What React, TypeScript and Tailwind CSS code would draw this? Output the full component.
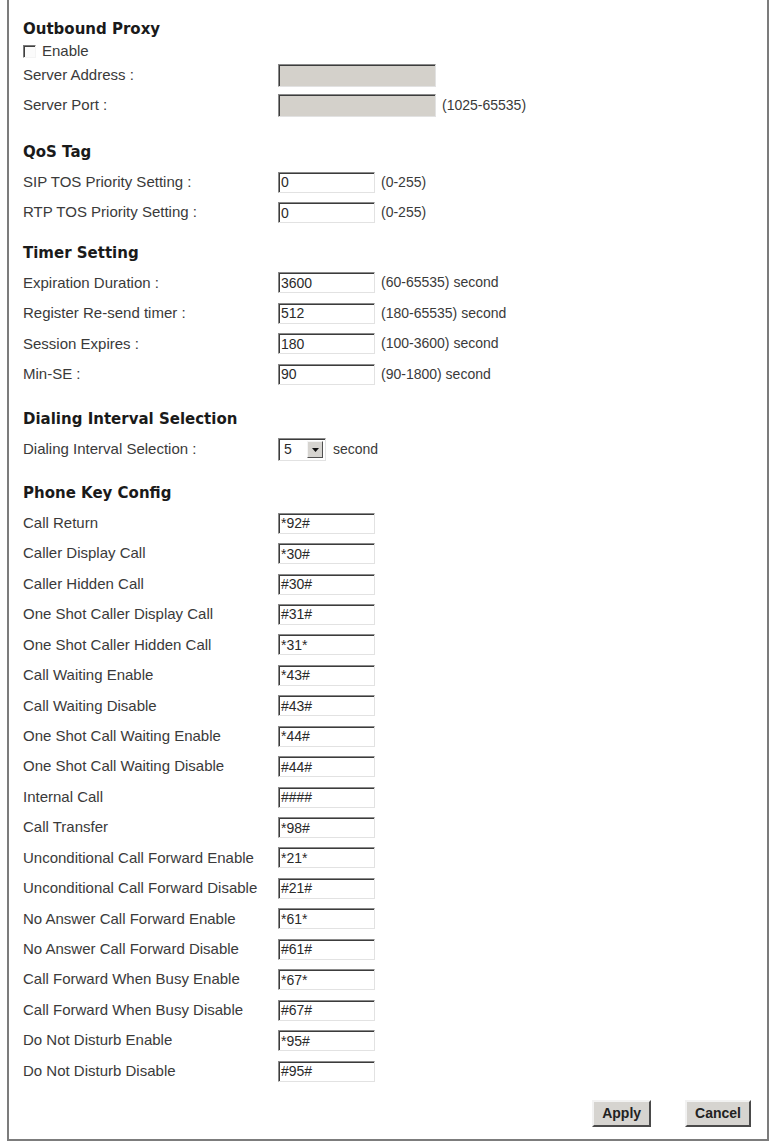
import type { ReactNode } from 'react';

const SANS = "font-['Liberation_Sans',Arial,sans-serif]";
const HEAD = "font-['DejaVu_Sans',Verdana,sans-serif]";

const PHONE_KEYS: [string, string][] = [
  ['Call Return', '*92#'],
  ['Caller Display Call', '*30#'],
  ['Caller Hidden Call', '#30#'],
  ['One Shot Caller Display Call', '#31#'],
  ['One Shot Caller Hidden Call', '*31*'],
  ['Call Waiting Enable', '*43#'],
  ['Call Waiting Disable', '#43#'],
  ['One Shot Call Waiting Enable', '*44#'],
  ['One Shot Call Waiting Disable', '#44#'],
  ['Internal Call', '####'],
  ['Call Transfer', '*98#'],
  ['Unconditional Call Forward Enable', '*21*'],
  ['Unconditional Call Forward Disable', '#21#'],
  ['No Answer Call Forward Enable', '*61*'],
  ['No Answer Call Forward Disable', '#61#'],
  ['Call Forward When Busy Enable', '*67*'],
  ['Call Forward When Busy Disable', '#67#'],
  ['Do Not Disturb Enable', '*95#'],
  ['Do Not Disturb Disable', '#95#'],
];

const TIMERS: [string, string, string][] = [
  ['Expiration Duration :', '3600', '(60-65535) second'],
  ['Register Re-send timer :', '512', '(180-65535) second'],
  ['Session Expires :', '180', '(100-3600) second'],
  ['Min-SE :', '90', '(90-1800) second'],
];

function Heading({ children }: { children: ReactNode }) {
  return (
    <div className={`h-[30px] flex items-center ${HEAD} text-[15px] font-bold text-[#1a1a1a]`}>
      {children}
    </div>
  );
}

function Row({ label, children }: { label: string; children: ReactNode }) {
  return (
    <div className="h-[30.45px] flex items-center">
      <div className="w-[255px] shrink-0 text-[15px] text-[#3a3a3a]">{label}</div>
      <div className="flex items-center">{children}</div>
    </div>
  );
}

function TextBox({ value, wide, disabled }: { value?: string; wide?: boolean; disabled?: boolean }) {
  return (
    <div
      className={`${wide ? 'w-[158px] h-[23px]' : 'w-[97px] h-[21px]'} ${
        disabled ? 'bg-[#d4d1cb]' : 'bg-white'
      } border border-t-[#8a8a8a] border-l-[#8a8a8a] border-r-[#e2e2e2] border-b-[#e2e2e2] shadow-[inset_1px_1px_0_#3c3c3c] pl-[2px] flex items-center text-[14px] text-[#2a2a2a] leading-none`}
    >
      {value}
    </div>
  );
}

function Note({ children }: { children: ReactNode }) {
  return <span className="ml-[6px] text-[14px] text-[#3a3a3a]">{children}</span>;
}

function PushButton({ children }: { children: ReactNode }) {
  return (
    <button
      className={`h-[27px] px-[8px] bg-[#d6d4d0] border-2 border-t-[#f2f2f2] border-l-[#f2f2f2] border-r-[#4a4a4a] border-b-[#4a4a4a] text-[14px] font-bold text-[#222] ${SANS}`}
    >
      {children}
    </button>
  );
}

export default function App() {
  return (
    <div className={`bg-white w-[773px] h-[1143px] pl-[7px] ${SANS}`}>
      <div className="w-[762px] h-[1141px] border-l-2 border-r-2 border-b-2 border-[#7c7c7c] pl-[14px] pr-[16px] pt-[14px] flex flex-col">
        <Heading>Outbound Proxy</Heading>
        <div className="h-[16px] -mt-[1px] flex items-center gap-[6px] text-[15px] text-[#3a3a3a]">
          <span className="w-[13px] h-[13px] bg-[#fbfbfb] border border-t-[#7a7a7a] border-l-[#7a7a7a] border-r-[#f4f4f4] border-b-[#f4f4f4] shadow-[inset_1px_1px_0_#404040]" />
          Enable
        </div>
        <div className="h-[1px]" />
        <Row label="Server Address :">
          <TextBox wide disabled />
        </Row>
        <Row label="Server Port :">
          <TextBox wide disabled />
          <Note>(1025-65535)</Note>
        </Row>

        <div className="h-[16px]" />
        <Heading>QoS Tag</Heading>
        <Row label="SIP TOS Priority Setting :">
          <TextBox value="0" />
          <Note>(0-255)</Note>
        </Row>
        <Row label="RTP TOS Priority Setting :">
          <TextBox value="0" />
          <Note>(0-255)</Note>
        </Row>

        <div className="h-[10px]" />
        <Heading>Timer Setting</Heading>
        {TIMERS.map(([label, value, note]) => (
          <Row key={label} label={label}>
            <TextBox value={value} />
            <Note>{note}</Note>
          </Row>
        ))}

        <div className="h-[15px]" />
        <Heading>Dialing Interval Selection</Heading>
        <Row label="Dialing Interval Selection :">
          <div className="w-[48px] h-[23px] bg-white border border-t-[#8a8a8a] border-l-[#8a8a8a] border-r-[#e2e2e2] border-b-[#e2e2e2] shadow-[inset_1px_1px_0_#3c3c3c] flex items-center">
            <span className="flex-1 pl-[5px] text-[14px] text-[#2a2a2a]">5</span>
            <span className="w-[16px] h-[17px] mr-[2px] bg-[#d6d4d0] border border-t-[#f4f4f4] border-l-[#f4f4f4] border-r-[#505050] border-b-[#505050] flex items-center justify-center">
              <svg width="7" height="4" viewBox="0 0 7 4">
                <path d="M0 0h7L3.5 4z" fill="#111" />
              </svg>
            </span>
          </div>
          <span className="ml-[7px] text-[14px] text-[#3a3a3a]">second</span>
        </Row>

        <div className="h-[13px]" />
        <Heading>Phone Key Config</Heading>
        {PHONE_KEYS.map(([label, value]) => (
          <Row key={label} label={label}>
            <TextBox value={value} />
          </Row>
        ))}

        <div className="flex justify-end gap-[34px] mt-[14px]">
          <PushButton>Apply</PushButton>
          <PushButton>Cancel</PushButton>
        </div>
      </div>
    </div>
  );
}
